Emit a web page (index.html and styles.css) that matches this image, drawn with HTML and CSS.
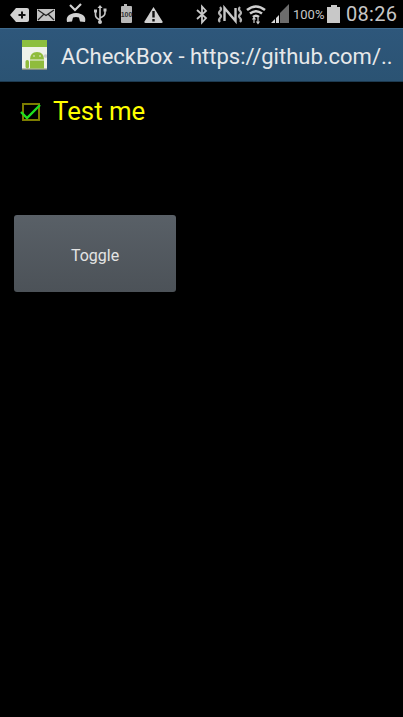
FILE: index.html
```html
<!DOCTYPE html>
<html>

<head>
    <meta charset="UTF-8">
    <meta name="viewport" content="width=device-width,initial-scale=1">
    <link rel="stylesheet" href="styles.css">
    <title>ACheckBox</title>
</head>

<body>
    <div class="status-bar">
        <svg class="icon w27" viewBox="6 0 27 28">
            <path d="M10 15l6-7h11q2 0 2 2v10q0 2-2 2H16z" fill="#d2d2d2" />
            <path d="M18.500 15h7M22 11.500v7" stroke="#111" stroke-width="2" fill="none" />
        </svg>
        <svg class="icon w27" viewBox="33 0 27 28">
            <rect x="37" y="9" width="18" height="12" fill="#c4c4c4" />
            <path d="M38 10l8 5.500 8-5.500M38 20l6-6M54 20l-6-6" stroke="#222" stroke-width="1.200" fill="none" />
        </svg>
        <svg class="icon w30" viewBox="60 0 30 28">
            <path d="M67 22q-2-8 9-9 11 1 9 9l-5-.5-1-4q-3-1-6 0l-1 4z" fill="#d2d2d2" />
            <path d="M70 5l5 5 6-6" stroke="#d2d2d2" stroke-width="2.200" fill="none" />
        </svg>
        <svg class="icon w23" viewBox="90 0 23 28">
            <path d="M100 7v15M95.500 12v3q0 3 4.500 5M105 11v2q0 3-5 5" stroke="#c8c8c8" stroke-width="1.600" fill="none" />
            <path d="M97.500 8l2.500-3 2.500 3z" fill="#c8c8c8" />
            <rect x="94" y="9.500" width="3" height="3" fill="#c8c8c8" />
            <rect x="103.500" y="8.500" width="3" height="3" fill="#c8c8c8" />
            <circle cx="100" cy="22" r="2" fill="#c8c8c8" />
        </svg>
        <svg class="icon w27" viewBox="113 0 27 28">
            <path d="M122 6h2V4h3v2h4q1 0 1 1v15q0 1-1 1h-9q-1 0-1-1V7q0-1 1-1z" fill="#b8b8b8" />
            <text class="battery-num" x="126.500" y="17">100</text>
        </svg>
        <svg class="icon w27" viewBox="140 0 27 28">
            <path d="M153.500 7l9 14.500q.5 1.500-1 1.500h-16q-1.500 0-1-1.500z" fill="#d0d0d0" />
            <path d="M153.500 11v6.500M153.500 19v2.500" stroke="#111" stroke-width="2.400" fill="none" />
        </svg>
        <svg class="icon w21 push" viewBox="192 0 21 28">
            <path d="M197 10l9 8-4 4.500v-16l4 4.500-9 8" stroke="#c8c8c8" stroke-width="1.800" fill="none" />
        </svg>
        <svg class="icon w31" viewBox="213 0 31 28">
            <path d="M220 7q2 2 0 4t0 3.500 0 3.500 0 4M240 7q-2 2 0 4t0 3.500 0 3.500 0 4" stroke="#b4b4b4" stroke-width="2.200" fill="none" />
            <path d="M224.500 21V8l11 13V8" stroke="#c8c8c8" stroke-width="2.400" fill="none" />
        </svg>
        <svg class="icon w24" viewBox="244 0 24 28">
            <path d="M247 10q9-7 18 0M250 13.500q6-4.500 12 0M253 17q3-2.500 6 0" stroke="#cfcfcf" stroke-width="2.600" fill="none" />
            <path d="M254 23v-5M252.500 19.500l1.500-2 1.500 2M258 17.500v5M256.500 21.500l1.500 2 1.500-2" stroke="#cfcfcf" stroke-width="1.200" fill="none" />
        </svg>
        <svg class="icon w23" viewBox="268 0 23 28">
            <path d="M271 23l4-4v4zM276 23v-5l3-3v8z" fill="#d8d8d8" />
            <path d="M280 23v-10l9-9v19z" fill="#6c6c6c" />
        </svg>
        <span class="battery-pct">100%</span>
        <span class="battery">
            <span class="battery-cap"></span>
            <span class="battery-body"></span>
        </span>
        <span class="clock">08:26</span>
    </div>

    <div class="title-bar">
        <svg class="app-icon" viewBox="0 0 25 30">
            <rect width="25" height="30" fill="#eef2ea" />
            <rect width="25" height="7" fill="#8cbf3f" />
            <rect y="28.500" width="25" height="1.500" fill="#7d8a80" />
            <path d="M8 19.500q0-7.500 7-7.500t7 7.500z" fill="#8fbc3c" />
            <rect x="8" y="20.500" width="14" height="8" fill="#8fbc3c" />
            <rect x="3.500" y="20" width="3.500" height="8.500" rx="1.700" fill="#8fbc3c" />
            <circle cx="12" cy="16" r="0.800" fill="#eef2ea" />
            <circle cx="18" cy="16" r="0.800" fill="#eef2ea" />
            <circle cx="23.500" cy="16" r="1.800" fill="#c9c9c9" />
        </svg>
        <span class="app-title">ACheckBox - https://github.com/..</span>
    </div>

    <div class="content">
        <label class="check-row">
            <svg class="check" viewBox="0 0 22 20">
                <rect x="3" y="1" width="16" height="16" fill="none" stroke="#7d7d00" stroke-width="2" />
                <path d="M1 9l6 6L20 2" fill="none" stroke="#1fe01f" stroke-width="2.400" />
            </svg>
            <span class="check-label">Test me</span>
        </label>
        <button class="toggle">Toggle</button>
    </div>
</body>

</html>
```

FILE: styles.css
```css
*,
*::before,
*::after {
    box-sizing: border-box;
    padding: 0;
    margin: 0;
}

body {
    height: 100vh;
    overflow: hidden;
    background: #000;
    font-family: Roboto, "Liberation Sans", sans-serif;
}

.status-bar {
    display: flex;
    align-items: center;
    height: 28px;
    padding: 0 6px;
    color: #c6c6c6;
}

.icon {
    display: block;
    flex: none;
    height: 28px;
}

.w21 {
    width: 21px;
}

.w23 {
    width: 23px;
}

.w24 {
    width: 24px;
}

.w27 {
    width: 27px;
}

.w30 {
    width: 30px;
}

.w31 {
    width: 31px;
}

.push {
    margin-left: auto;
}

.battery-num {
    font-family: "Liberation Sans", sans-serif;
    font-size: 7px;
    font-weight: bold;
    text-anchor: middle;
    fill: #333;
}

.battery-pct {
    margin-left: 2px;
    font-size: 13px;
    width: 34px;
}

.battery {
    display: flex;
    flex-direction: column;
    align-items: center;
    width: 13px;
    margin-right: 6px;
    margin-bottom: 1px;
}

.battery-cap {
    width: 6px;
    height: 2px;
    background: #c8c8c8;
}

.battery-body {
    width: 13px;
    height: 16px;
    background: #c8c8c8;
}

.clock {
    width: 51px;
    font-size: 20px;
    letter-spacing: 0.3px;
}

.title-bar {
    display: flex;
    align-items: center;
    height: 54px;
    padding-left: 22px;
    background: linear-gradient(#2e577b, #2b5373);
    border-top: 1px solid #3f6a8c;
    border-bottom: 1px solid #1d3a50;
}

.app-icon {
    width: 25px;
    height: 30px;
    flex: none;
}

.app-title {
    margin-left: 14px;
    padding-top: 2px;
    font-size: 22px;
    color: #e6e8ea;
    white-space: nowrap;
}

.content {
    display: flex;
    flex-direction: column;
    align-items: flex-start;
    padding: 14px 0 0 14px;
}

.check-row {
    display: flex;
    align-items: center;
    height: 30px;
}

.check {
    width: 22px;
    height: 20px;
    margin: 4px 0 0 6px;
}

.check-label {
    margin-left: 11px;
    font-size: 25.8px;
    color: #ff0;
}

.toggle {
    width: 162px;
    height: 77px;
    margin-top: 89px;
    padding-top: 3px;
    border: none;
    border-radius: 3px;
    background: linear-gradient(#596067, #4c5258);
    font-family: Roboto, "Liberation Sans", sans-serif;
    font-size: 16px;
    color: #e4e4e4;
}
```
